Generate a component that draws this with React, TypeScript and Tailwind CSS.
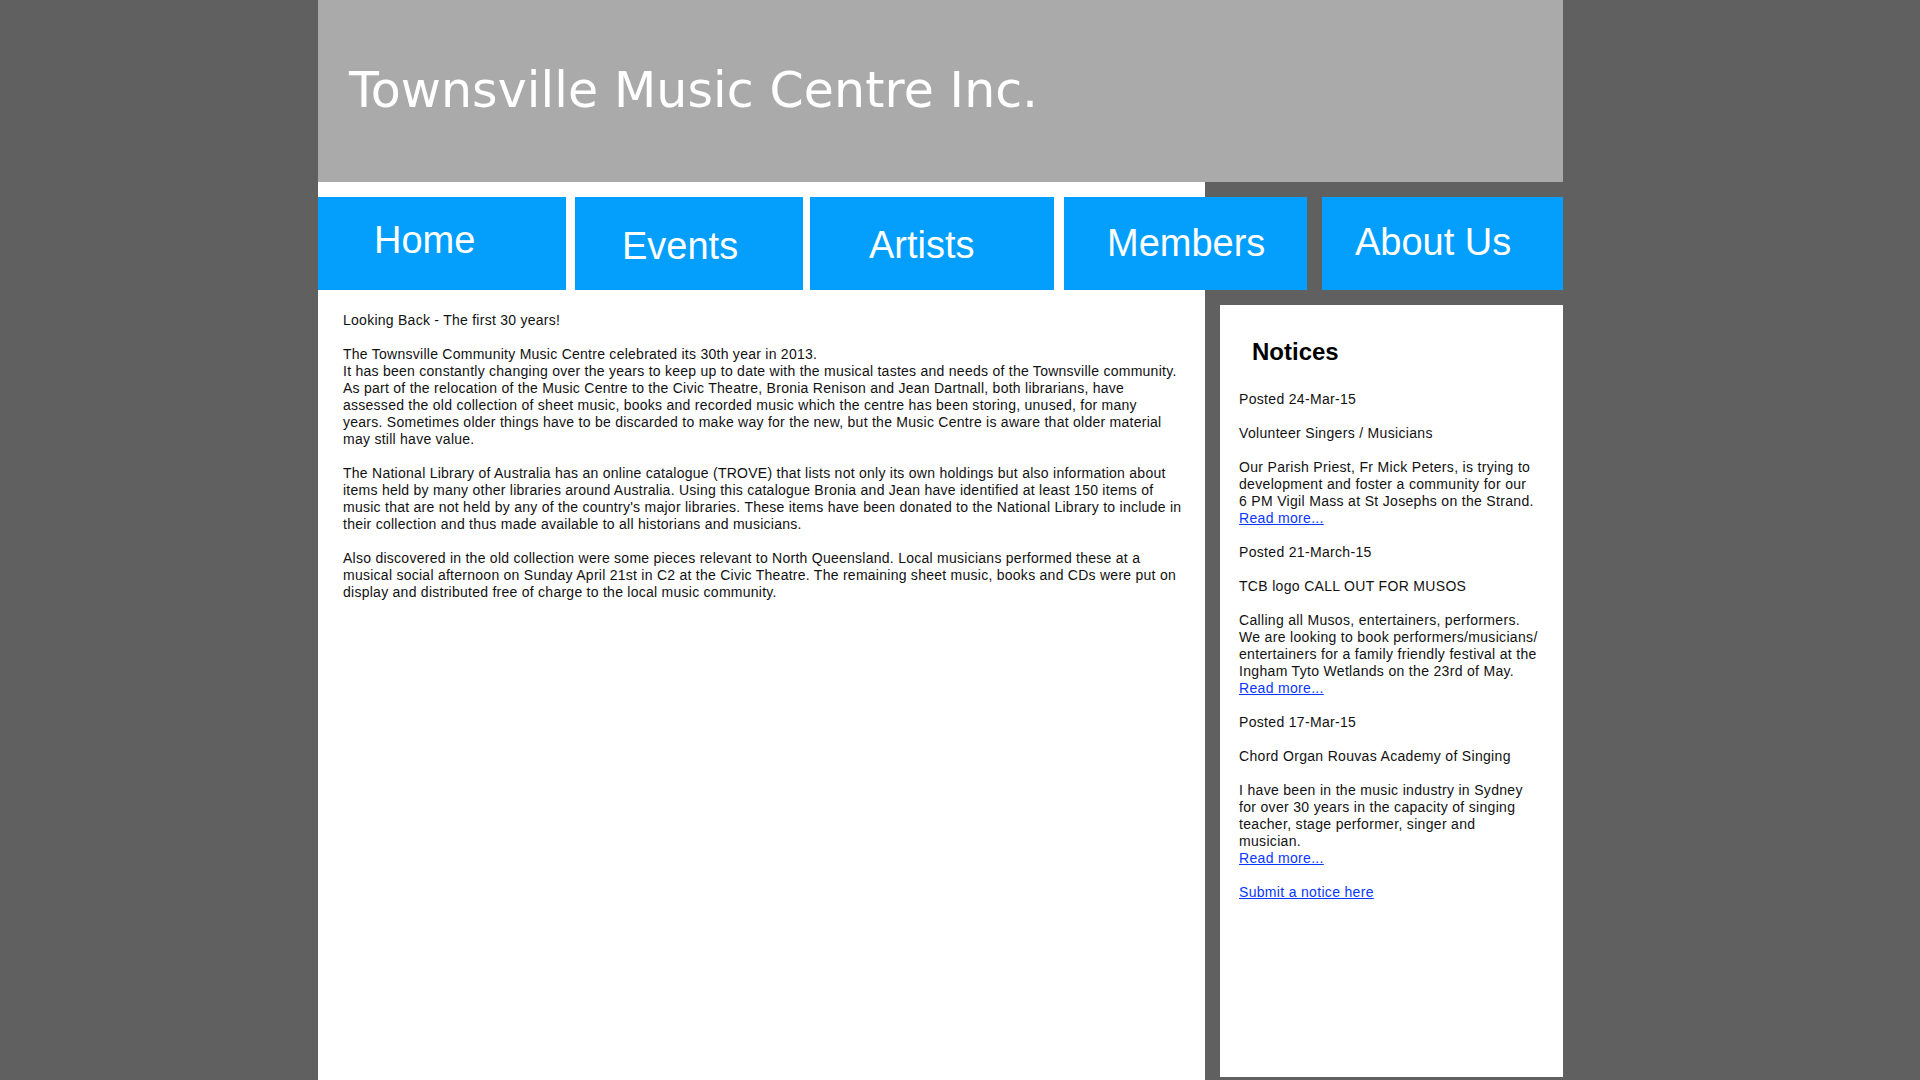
const navItems = [
  { label: 'Home', className: 'w-[248px] pl-[56px] pt-[24px]' },
  { label: 'Events', className: 'ml-[9px] w-[228px] pl-[47px] pt-[30px]' },
  { label: 'Artists', className: 'ml-[7px] w-[244px] pl-[59px] pt-[29px]' },
  { label: 'Members', className: 'ml-[10px] w-[243px] pl-[43px] pt-[27px]' },
  { label: 'About Us', className: 'ml-[15px] w-[241px] pl-[33px] pt-[26px]' },
];

// each paragraph keeps the line breaks of the original page
const story = [
  ['Looking Back - The first 30 years!'],
  [
    'The Townsville Community Music Centre celebrated its 30th year in 2013.',
    'It has been constantly changing over the years to keep up to date with the musical tastes and needs of the Townsville community.',
    'As part of the relocation of the Music Centre to the Civic Theatre, Bronia Renison and Jean Dartnall, both librarians, have',
    'assessed the old collection of sheet music, books and recorded music which the centre has been storing, unused, for many',
    'years. Sometimes older things have to be discarded to make way for the new, but the Music Centre is aware that older material',
    'may still have value.',
  ],
  [
    'The National Library of Australia has an online catalogue (TROVE) that lists not only its own holdings but also information about',
    'items held by many other libraries around Australia. Using this catalogue Bronia and Jean have identified at least 150 items of',
    "music that are not held by any of the country's major libraries. These items have been donated to the National Library to include in",
    'their collection and thus made available to all historians and musicians.',
  ],
  [
    'Also discovered in the old collection were some pieces relevant to North Queensland. Local musicians performed these at a',
    'musical social afternoon on Sunday April 21st in C2 at the Civic Theatre. The remaining sheet music, books and CDs were put on',
    'display and distributed free of charge to the local music community.',
  ],
];

const notices = [
  {
    posted: 'Posted 24-Mar-15',
    title: 'Volunteer Singers / Musicians',
    body: [
      'Our Parish Priest, Fr Mick Peters, is trying to',
      'development and foster a community for our',
      '6 PM Vigil Mass at St Josephs on the Strand.',
    ],
  },
  {
    posted: 'Posted 21-March-15',
    title: 'TCB logo CALL OUT FOR MUSOS',
    body: [
      'Calling all Musos, entertainers, performers.',
      'We are looking to book performers/musicians/',
      'entertainers for a family friendly festival at the',
      'Ingham Tyto Wetlands on the 23rd of May.',
    ],
  },
  {
    posted: 'Posted 17-Mar-15',
    title: 'Chord Organ Rouvas Academy of Singing',
    body: [
      'I have been in the music industry in Sydney',
      'for over 30 years in the capacity of singing',
      'teacher, stage performer, singer and',
      'musician.',
    ],
  },
];

function Lines({ lines }: { lines: string[] }) {
  return (
    <>
      {lines.map((line, i) => (
        <span key={i}>
          {line}
          {i < lines.length - 1 && <br />}
        </span>
      ))}
    </>
  );
}

export default function App() {
  return (
    <div className="min-h-screen bg-[#606060] font-['Liberation_Sans',Arial,sans-serif]">
      <div className="ml-[318px] w-[1245px]">
        <header className="h-[182px] bg-[#aaaaaa] pl-[31px] pt-[66px]">
          <h1 className="font-['DejaVu_Sans',Verdana,sans-serif] text-[49px] leading-none tracking-[0.1px] text-white">
            Townsville Music Centre Inc.
          </h1>
        </header>

        <nav className="flex bg-[linear-gradient(to_right,#ffffff_887px,#606060_887px)] pt-[15px]">
          {navItems.map((item) => (
            <a
              key={item.label}
              href="#"
              className={`h-[93px] shrink-0 bg-[#049ffd] text-[38px] leading-none text-white ${item.className}`}
            >
              {item.label}
            </a>
          ))}
        </nav>

        <div className="flex h-[790px]">
          <main className="w-[887px] bg-white pl-[25px] pt-[22px] text-[14px] leading-[17px] tracking-[0.26px] text-[#111]">
            {story.map((para, i) => (
              <p key={i} className="mb-[17px] whitespace-nowrap">
                <Lines lines={para} />
              </p>
            ))}
          </main>

          <aside className="w-[358px] pl-[15px] pt-[15px]">
            <div className="h-[772px] w-[343px] bg-white pl-[19px] pt-[33px] text-[14px] leading-[17px] tracking-[0.32px] text-[#111]">
              <h2 className="pl-[13px] text-[24px] font-bold leading-[28px] tracking-normal text-black">
                Notices
              </h2>
              <div className="mt-[25px] whitespace-nowrap">
                {notices.map((n) => (
                  <div key={n.posted} className="mb-[17px]">
                    <p className="mb-[17px]">{n.posted}</p>
                    <p className="mb-[17px]">{n.title}</p>
                    <p>
                      <Lines lines={n.body} />
                    </p>
                    <a href="#" className="text-[#0a37ff] underline">
                      Read more...
                    </a>
                  </div>
                ))}
                <a href="#" className="text-[#0a37ff] underline">
                  Submit a notice here
                </a>
              </div>
            </div>
          </aside>
        </div>
      </div>
    </div>
  );
}
